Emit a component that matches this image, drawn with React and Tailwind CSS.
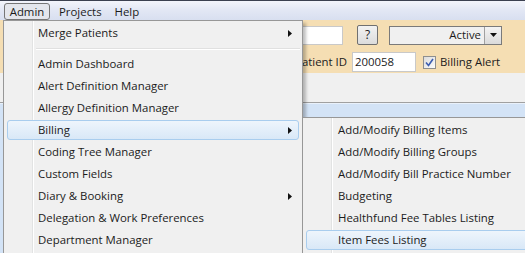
import React from 'react';

const font = { fontFamily: '"Open Sans", "Noto Sans", sans-serif' };

const mainItems = [
  { label: 'Admin Dashboard' },
  { label: 'Alert Definition Manager' },
  { label: 'Allergy Definition Manager' },
  { label: 'Billing', sub: true, active: true },
  { label: 'Coding Tree Manager' },
  { label: 'Custom Fields' },
  { label: 'Diary & Booking', sub: true },
  { label: 'Delegation & Work Preferences' },
  { label: 'Department Manager' },
];

const billingItems = [
  { label: 'Add/Modify Billing Items' },
  { label: 'Add/Modify Billing Groups' },
  { label: 'Add/Modify Bill Practice Number' },
  { label: 'Budgeting' },
  { label: 'Healthfund Fee Tables Listing' },
  { label: 'Item Fees Listing', active: true },
];

function Arrow() {
  return (
    <svg width="4" height="7" viewBox="0 0 4 7" className="absolute right-[8px] top-[8px]">
      <path d="M0 0 L4 3.5 L0 7 Z" fill="#111" />
    </svg>
  );
}

function MenuItem({ label, sub, active, textLeft }) {
  return (
    <div className="relative h-[22px] flex items-center">
      {active && (
        <div className="absolute left-[1px] right-[1px] top-[1px] bottom-[1px] rounded-[3px] border border-[#a9cdee] bg-gradient-to-b from-[#eef5fc] to-[#d9e8f7]" />
      )}
      <span className="relative text-[11.4px] text-[#1b1b1b] whitespace-nowrap" style={{ paddingLeft: textLeft }}>
        {label}
      </span>
      {sub && <Arrow />}
    </div>
  );
}

function Gutter({ left }) {
  return (
    <div className="absolute top-0 bottom-0 flex" style={{ left }}>
      <div className="w-px bg-[#e2e3e3]" />
      <div className="w-px bg-white" />
    </div>
  );
}

export default function App() {
  return (
    <div className="relative w-[525px] h-[253px] overflow-hidden bg-[#f0f0f0]" style={font}>
      {/* menu bar */}
      <div className="h-[20px] border-t border-[#3c4150] bg-gradient-to-b from-[#f3f5fb] via-[#e2e7f4] to-[#d8dff0] flex items-center text-[11.4px] text-[#1b1b1b]">
        <div className="ml-[4px] h-[17px] mt-[2px] w-[46px] flex items-center justify-center rounded-[3px] border border-[#767676] bg-[#e4e6ec]">Admin</div>
        <div className="ml-[9px] mt-[2px]">Projects</div>
        <div className="ml-[13px] mt-[2px]">Help</div>
      </div>

      {/* form behind the menus */}
      <div className="h-[53px] bg-[#f5deb3] flex flex-col">
        <div className="flex items-center h-[20px] mt-[5px]">
          <div className="ml-[300px] w-[43px] h-[19px] bg-white border border-[#c9c9c9]" />
          <div className="ml-[14px] w-[21px] h-[20px] rounded-[2px] border border-[#707070] bg-gradient-to-b from-[#f2f2f2] to-[#dcdcdc] flex items-center justify-center text-[12px] text-[#1b1b1b]">?</div>
          <div className="ml-[11px] w-[113px] h-[19px] border border-[#7a7a7a] bg-[#f0f0f0] flex items-center">
            <span className="flex-1 text-right pr-[3px] text-[11.4px] text-[#1b1b1b]">Active</span>
            <div className="w-[17px] h-full border-l border-[#a0a0a0] bg-gradient-to-b from-[#f4f4f4] to-[#dadada] flex items-center justify-center">
              <svg width="7" height="4" viewBox="0 0 7 4"><path d="M0 0 H7 L3.5 4 Z" fill="#111" /></svg>
            </div>
          </div>
        </div>
        <div className="flex items-center h-[20px] mt-[7px]">
          <span className="ml-[280px] w-[67px] text-right text-[11.4px] text-[#1b1b1b]">Patient ID</span>
          <div className="ml-[5px] w-[64px] h-[20px] bg-white border border-[#c9c9c9] flex items-center pl-[2px] text-[11.4px] text-[#1b1b1b]">200058</div>
          <div className="ml-[7px] w-[13px] h-[13px] border border-[#8e8f8f] bg-gradient-to-br from-[#dcdcdc] to-[#fbfbfb] flex items-center justify-center">
            <svg width="9" height="9" viewBox="0 0 9 9"><path d="M1 4.5 L3.5 7.5 L8 1" stroke="#3b5db0" strokeWidth="1.6" fill="none" /></svg>
          </div>
          <span className="ml-[4px] text-[11.4px] text-[#1b1b1b]">Billing Alert</span>
        </div>
      </div>
      <div className="h-[29px] bg-[#f0f0f0]" />
      <div className="h-px bg-[#a0a0a0]" />
      <div className="h-[150px] bg-[#d3e3f6] border-t border-[#e9f1fb]" />

      {/* Admin dropdown */}
      <div className="absolute left-[3px] top-[20px] w-[300px] h-[240px] bg-[#f0f0f0] border border-[#979797] shadow-[3px_3px_3px_rgba(0,0,0,0.25)] px-[2px] pt-[1px]">
        <Gutter left={28} />
        <MenuItem label="Merge Patients" sub textLeft={32} />
        <div className="h-[9px] flex items-center pl-[30px]">
          <div className="flex-1 flex flex-col">
            <div className="h-px bg-[#e0e0e0]" />
            <div className="h-px bg-white" />
          </div>
        </div>
        {mainItems.map((it) => (
          <MenuItem key={it.label} {...it} textLeft={32} />
        ))}
      </div>

      {/* Billing submenu */}
      <div className="absolute left-[302px] top-[117px] w-[230px] h-[140px] bg-[#f0f0f0] border border-[#979797] px-[2px] pt-[1px]">
        <Gutter left={28} />
        {billingItems.map((it) => (
          <MenuItem key={it.label} {...it} textLeft={33} />
        ))}
      </div>
    </div>
  );
}
